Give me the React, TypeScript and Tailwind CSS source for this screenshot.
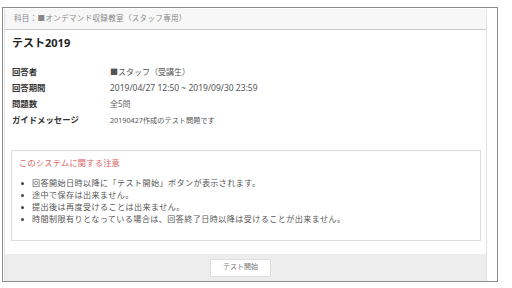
import React from "react";

const font = { fontFamily: '"Noto Sans", "Noto Sans CJK JP", sans-serif' };

const rows: [string, string, string][] = [
  ["回答者", "■スタッフ（受講生）", "text-[8px] text-[#555]"],
  ["回答期間", "2019/04/27 12:50 ~ 2019/09/30 23:59", "text-[8.5px] text-[#555]"],
  ["問題数", "全5問", "text-[8px] text-[#666]"],
  ["ガイドメッセージ", "20190427作成のテスト問題です", "text-[7.2px] text-[#555]"],
];

const notes = [
  "回答開始日時以降に「テスト開始」ボタンが表示されます。",
  "途中で保存は出来ません。",
  "提出後は再度受けることは出来ません。",
  "時間制限有りとなっている場合は、回答終了日時以降は受けることが出来ません。",
];

export default function App() {
  return (
    <div className="w-[512px] h-[288px] bg-white overflow-hidden pt-[7px] pl-[2px]" style={font}>
      <div className="w-[496px] h-[275px] border border-[#8c8c8c] bg-white flex">
        <div className="ml-[1px] mt-[1px] w-[483px] border-x border-[#e2e2e2] flex flex-col">
          <div className="h-[21px] bg-[#f7f7f7] border-b border-[#c9c9c9] flex items-center pl-[9px] text-[7.5px] tracking-[0.35px] text-[#888]">
            科目：■オンデマンド収録教室（スタッフ専用）
          </div>
          <div className="flex-1 flex flex-col">
            <div className="mt-[6px] pl-[7px] h-[14px] leading-[14px] text-[11px] font-bold text-[#222]">
              テスト2019
            </div>
            <div className="mt-[14px] flex flex-col">
              {rows.map(([k, v, cls]) => (
                <div key={k} className="flex h-[16px] items-center">
                  <div className="w-[105px] pl-[7px] text-[8.4px] font-bold text-[#333]">{k}</div>
                  <div className={cls}>{v}</div>
                </div>
              ))}
            </div>
            <div className="mt-[22px] ml-[6px] mr-[5px] h-[91px] border border-[#dcdcdc] pl-[7px] pt-[6px]">
              <div className="h-[12px] leading-[12px] text-[8.2px] tracking-[0.25px] text-[#e06666]">このシステムに関する注意</div>
              <div className="mt-[8px] flex flex-col">
                {notes.map((n) => (
                  <div key={n} className="flex items-center h-[12px] text-[8.1px] text-[#555] tracking-[0.4px]">
                    <span className="w-[3px] h-[3px] rounded-full bg-[#444] ml-[2px] mr-[8px] shrink-0" />
                    <span>{n}</span>
                  </div>
                ))}
              </div>
            </div>
          </div>
          <div className="h-[27px] bg-[#ededed] flex items-center pl-[205px]">
            <div className="w-[61px] h-[18px] bg-white border border-[#dedede] flex items-center justify-center text-[7px] text-[#777]">
              テスト開始
            </div>
          </div>
        </div>
      </div>
    </div>
  );
}
